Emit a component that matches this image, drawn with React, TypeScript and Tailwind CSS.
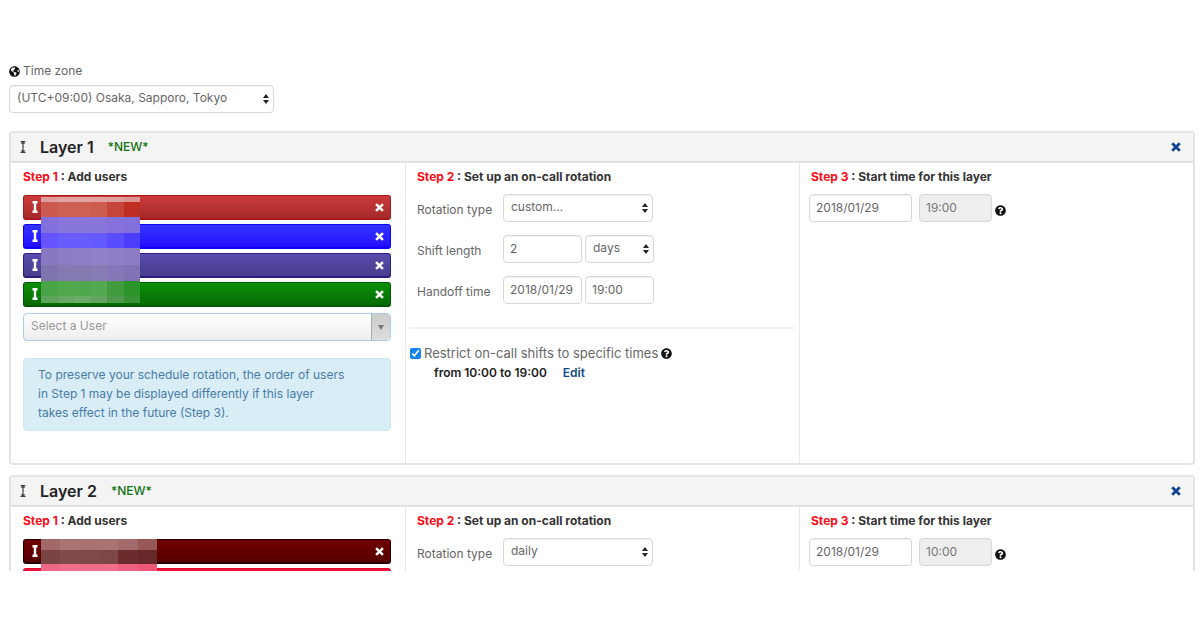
import { useId } from "react";
import type { ReactNode } from "react";
import { FaGlobeAmericas, FaQuestionCircle } from "react-icons/fa";

type User = { bar: string };

type Mosaic = { box: string; rows: { height: string; cells: string[] }[] };

type Layer = {
  name: string;
  rotation: string;
  startDate: string;
  startTime: string;
  users: User[];
  mosaic: Mosaic;
  details: boolean;
};

const layers: Layer[] = [
  {
    name: "Layer 1",
    rotation: "custom...",
    startDate: "2018/01/29",
    startTime: "19:00",
    details: true,
    users: [
      { bar: "border-[#a81818] from-[#cb3a3a] to-[#a52a2a]" },
      { bar: "border-[#0f04f4] from-[#3333ff] to-[#2508ff]" },
      { bar: "border-[#2c1c80] from-[#5a4cae] to-[#483d8b]" },
      { bar: "border-[#005800] from-[#0a9008] to-[#066a04]" },
    ],
    mosaic: {
      box: "top-0.5 w-[99px]",
      rows: [
        { height: "h-[5px]", cells: ["bg-[#df9c9c]", "bg-[#e0a5a3]", "bg-[#e0a5a3]", "bg-[#e0a3a0]", "bg-[#df9f9b]", "bg-[#dc9490]"] },
        { height: "h-[15px]", cells: ["bg-[#ca5a50]", "bg-[#ce6056]", "bg-[#ce6054]", "bg-[#cd5c50]", "bg-[#c6453a]", "bg-[#bf2e22]"] },
        { height: "h-[16px]", cells: ["bg-[#8370dc]", "bg-[#8876dc]", "bg-[#8876dc]", "bg-[#8876dc]", "bg-[#8672da]", "bg-[#8470da]"] },
        { height: "h-[15px]", cells: ["bg-[#6554ff]", "bg-[#685cff]", "bg-[#685cff]", "bg-[#645aff]", "bg-[#5a4cff]", "bg-[#4c3cfc]"] },
        { height: "h-[17px]", cells: ["bg-[#8878c2]", "bg-[#8c7cc4]", "bg-[#8e7ec6]", "bg-[#9080c8]", "bg-[#8e7ec6]", "bg-[#8c7cc4]"] },
        { height: "h-[16px]", cells: ["bg-[#8074b0]", "bg-[#857ab2]", "bg-[#857ab2]", "bg-[#887cb6]", "bg-[#8678b8]", "bg-[#8072b4]"] },
        { height: "h-[15px]", cells: ["bg-[#48a444]", "bg-[#50aa4c]", "bg-[#50a84e]", "bg-[#54a852]", "bg-[#409c3c]", "bg-[#2c942a]"] },
        { height: "h-[7px]", cells: ["bg-[#5ca45a]", "bg-[#66a864]", "bg-[#6cac6a]", "bg-[#62a460]", "bg-[#4c9a4a]", "bg-[#389236]"] },
      ],
    },
  },
  {
    name: "Layer 2",
    rotation: "daily",
    startDate: "2018/01/29",
    startTime: "10:00",
    details: false,
    users: [
      { bar: "border-[#260000] from-[#700000] to-[#560000]" },
      { bar: "border-[#e00a30] from-[#ee1038] to-[#dc143c]" },
    ],
    mosaic: {
      box: "top-0 w-[116px]",
      rows: [
        { height: "h-[11px]", cells: ["bg-[#a06868]", "bg-[#a87474]", "bg-[#a87272]", "bg-[#a87474]", "bg-[#a26a6a]", "bg-[#985858]"] },
        { height: "h-[14px]", cells: ["bg-[#7a4444]", "bg-[#804a4a]", "bg-[#804848]", "bg-[#7e4646]", "bg-[#6a2c2c]", "bg-[#662828]"] },
        { height: "h-[12px]", cells: ["bg-[#f06888]", "bg-[#f26c8c]", "bg-[#f26c8c]", "bg-[#f26c8c]", "bg-[#f06080]", "bg-[#ee5878]"] },
      ],
    },
  },
];

function GripIcon({ className }: { className: string }) {
  return (
    <svg viewBox="0 0 6 12" className={className} fill="currentColor" aria-hidden="true">
      <path d="M0.5 0h5v2.6H4.2v6.8h1.3V12h-5V9.4h1.3V2.6H0.5z" />
    </svg>
  );
}

function ArrowGrip() {
  return (
    <svg viewBox="0 0 6 12" className="h-3 w-1.5 text-[#444]" fill="currentColor" aria-hidden="true">
      <path d="M0.5 0h5v1H4.2l1 1.8H3.6v6.4h1.6l-1 1.8h1.3v1h-5v-1h1.3l-1-1.8h1.6V2.8H0.8l1-1.8H0.5z" />
    </svg>
  );
}

function CrossIcon({ className }: { className: string }) {
  return (
    <svg viewBox="0 0 10 10" className={className} fill="none" stroke="currentColor" strokeWidth="2.8" aria-hidden="true">
      <path d="M1.2 1.2l7.6 7.6M8.8 1.2L1.2 8.8" />
    </svg>
  );
}

const field =
  "h-7 rounded border border-[#d8d8d8] bg-white text-[12px] leading-4 text-[#666] shadow-[inset_0_1px_1px_rgba(0,0,0,0.06)] outline-none";

function Select({ id, label, value, className }: { id?: string; label?: string; value: string; className: string }) {
  return (
    <span className={`relative inline-flex ${className}`}>
      <select id={id} aria-label={label} className={`${field} w-full appearance-none pb-0.5 pl-[7px] pr-5`} defaultValue={value}>
        <option>{value}</option>
      </select>
      <svg viewBox="0 0 6 10" className="pointer-events-none absolute right-[5px] top-[9px] h-2.5 w-1.5" fill="#222" aria-hidden="true">
        <path d="M3 0l3 4H0zM3 10L0 6h6z" />
      </svg>
    </span>
  );
}

function StepTitle({ step, children }: { step: string; children: ReactNode }) {
  return (
    <h3 className="text-[12px] font-bold leading-4 text-[#333]">
      <span className="text-[#ff0a16]">{step}</span> : {children}
    </h3>
  );
}

function UserMosaic({ mosaic }: { mosaic: Mosaic }) {
  return (
    <div className={`absolute left-[18px] ${mosaic.box}`} aria-hidden="true">
      {mosaic.rows.map((row, i) => (
        <div key={i} className={`grid grid-cols-6 ${row.height}`}>
          {row.cells.map((cell, j) => (
            <span key={j} className={cell} />
          ))}
        </div>
      ))}
    </div>
  );
}

function UserColumn({ layer }: { layer: Layer }) {
  return (
    <div className="pl-3 pr-3.5 pt-1.5">
      <StepTitle step="Step 1">Add users</StepTitle>
      <div className="relative mt-2.5">
        <ul className="flex flex-col gap-1">
          {layer.users.map((user) => (
            <li
              key={user.bar}
              className={`flex h-[25px] items-center justify-between rounded-[3px] border border-b-2 bg-linear-to-b pl-2 pr-1.5 text-white ${user.bar}`}
            >
              <GripIcon className="h-3 w-1.5" />
              <button type="button" aria-label="Remove user">
                <CrossIcon className="size-[9px]" />
              </button>
            </li>
          ))}
        </ul>
        <UserMosaic mosaic={layer.mosaic} />
      </div>
      {layer.details && (
        <>
          <div className="relative mt-1.5 flex">
            <select
              aria-label="Select a User"
              className="h-7 w-full appearance-none rounded border border-[#a9cdee] bg-linear-to-b from-white to-[#eee] pb-0.5 pl-[7px] text-[12px] leading-4 text-[#999]"
            >
              <option>Select a User</option>
            </select>
            <span className="pointer-events-none absolute inset-y-px right-px flex w-[19px] items-center justify-center rounded-r-[3px] border-l border-[#aaa] bg-linear-to-b from-[#ccc] to-[#ddd]">
              <svg viewBox="0 0 6 5" className="h-[5px] w-1.5" fill="#777" aria-hidden="true">
                <path d="M0 0h6L3 5z" />
              </svg>
            </span>
          </div>
          <p className="mb-8 mt-[17px] rounded border border-[#cdeaf4] bg-[#d9edf7] px-3.5 pb-2 pt-1.5 text-[12px] leading-[19px] text-[#4a7ba6]">
            To preserve your schedule rotation, the order of users
            <br />
            in Step 1 may be displayed differently if this layer
            <br />
            takes effect in the future (Step 3).
          </p>
        </>
      )}
    </div>
  );
}

function RotationColumn({ layer }: { layer: Layer }) {
  const id = useId();
  const label = "w-[86px] pt-1 text-[12px] leading-4 text-[#666]";

  return (
    <div className="border-l border-[#e8e8e8] pl-[3px] pr-1 pt-1.5">
      <div className="pl-2">
        <StepTitle step="Step 2">Set up an on-call rotation</StepTitle>
        <div className="mt-[9px] flex flex-col gap-[13px]">
          <div className="flex items-center">
            <label htmlFor={`${id}-type`} className={label}>Rotation type</label>
            <Select id={`${id}-type`} value={layer.rotation} className="w-[150px]" />
          </div>
          {layer.details && (
            <>
              <div className="flex items-center">
                <label htmlFor={`${id}-length`} className={label}>Shift length</label>
                <input id={`${id}-length`} className={`${field} w-[79px] px-1.5 pb-0.5`} defaultValue="2" />
                <Select label="Shift unit" value="days" className="ml-[3px] w-[69px]" />
              </div>
              <div className="flex items-center">
                <label htmlFor={`${id}-handoff`} className={label}>Handoff time</label>
                <input id={`${id}-handoff`} className={`${field} w-[79px] px-1.5 pb-0.5`} defaultValue="2018/01/29" />
                <input aria-label="Handoff hour" className={`${field} ml-[3px] w-[69px] px-1.5 pb-0.5`} defaultValue="19:00" />
              </div>
            </>
          )}
        </div>
      </div>
      {layer.details && (
        <>
          <hr className="mt-[23px] border-t-2 border-[#f0f0fb]" />
          <div className="mt-4 flex items-center gap-[3px] pl-px">
            <input id={`${id}-restrict`} type="checkbox" defaultChecked className="size-[11px] accent-[#1482f0]" />
            <label htmlFor={`${id}-restrict`} className="text-[13px] leading-4 text-[#666]">
              Restrict on-call shifts to specific times
            </label>
            <FaQuestionCircle className="size-[11px] text-[#111]" aria-label="Help" />
          </div>
          <p className="mt-1 pl-[25px] text-[12px] font-semibold leading-4 text-[#222]">
            from 10:00 to 19:00
            <a href="#edit" className="ml-4 text-[#0f4a8a]">Edit</a>
          </p>
        </>
      )}
    </div>
  );
}

function StartColumn({ layer }: { layer: Layer }) {
  return (
    <div className="border-l border-[#e8e8e8] px-[9px] pt-1.5">
      <div className="pl-0.5">
        <StepTitle step="Step 3">Start time for this layer</StepTitle>
      </div>
      <div className="mt-[9px] flex items-center">
        <input aria-label="Start date" className={`${field} w-[103px] px-1.5 pb-0.5`} defaultValue={layer.startDate} />
        <input
          aria-label="Start time"
          disabled
          className="ml-[7px] mr-[3px] h-7 w-[73px] rounded border border-[#d8d8d8] bg-[#eee] px-1.5 pb-0.5 text-[12px] leading-4 text-[#777]"
          defaultValue={layer.startTime}
        />
        <FaQuestionCircle className="mt-1 size-[11px] text-[#111]" aria-label="Help" />
      </div>
    </div>
  );
}

function LayerCard({ layer }: { layer: Layer }) {
  return (
    <section className="rounded border-2 border-[#e4e4e4]">
      <header className="flex h-[30px] items-center border-b-2 border-[#e2e2e2] bg-[#f4f4f4] pl-[9px] pr-3">
        <ArrowGrip />
        <h2 className="ml-3.5 text-[16px] font-semibold leading-5 text-[#222]">{layer.name}</h2>
        <span className="ml-3.5 text-[12px] font-medium leading-5 text-[#127312]">*NEW*</span>
        <button type="button" aria-label={`Remove ${layer.name}`} className="ml-auto text-[#0f4590]">
          <CrossIcon className="size-[10px]" />
        </button>
      </header>
      <div className="grid grid-cols-3">
        <UserColumn layer={layer} />
        <RotationColumn layer={layer} />
        <StartColumn layer={layer} />
      </div>
    </section>
  );
}

export default function App() {
  return (
    <div className="flex h-screen flex-col bg-white pb-[59px] pt-[63px] font-['Inter',sans-serif]">
      <main className="min-h-0 flex-1 overflow-hidden pl-[9px] pr-[5px]">
        <label htmlFor="timezone" className="flex items-center gap-[3px] text-[12px] leading-4 text-[#666]">
          <FaGlobeAmericas className="size-[11px] text-[#111]" aria-hidden="true" />
          Time zone
        </label>
        <div className="mt-1.5 flex">
          <Select id="timezone" value="(UTC+09:00) Osaka, Sapporo, Tokyo" className="w-[265px]" />
        </div>
        <div className="mt-[18px] flex flex-col gap-2.5">
          {layers.map((layer) => (
            <LayerCard key={layer.name} layer={layer} />
          ))}
        </div>
      </main>
    </div>
  );
}
